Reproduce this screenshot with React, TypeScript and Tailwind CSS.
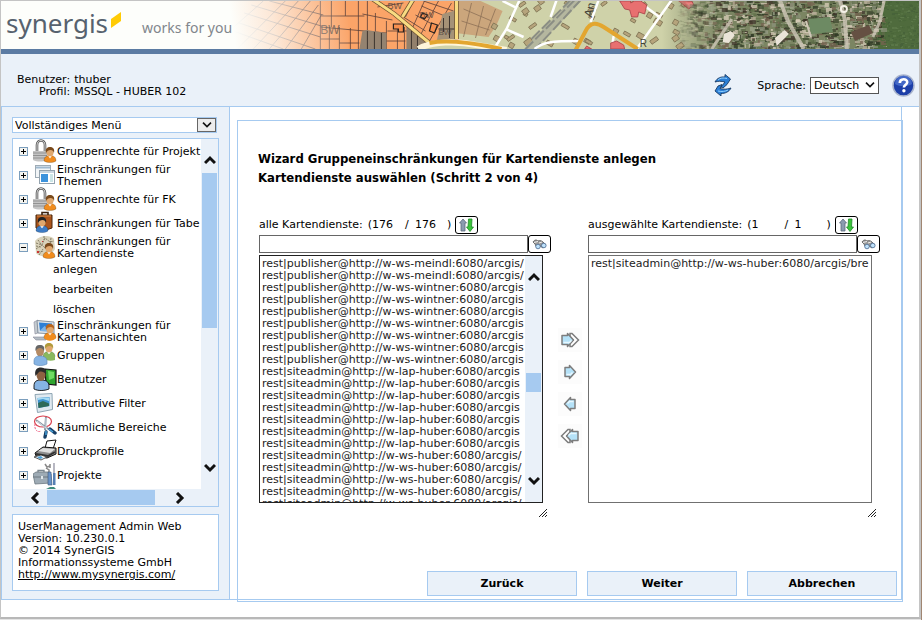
import { useState } from 'react';
import type { ReactNode } from 'react';
import clsx from 'clsx';

const LEFT_SERVICES = [
  ...Array(2).fill('rest|publisher@http://w-ws-meindl:6080/arcgis/'),
  ...Array(7).fill('rest|publisher@http://w-ws-wintner:6080/arcgis'),
  ...Array(7).fill('rest|siteadmin@http://w-lap-huber:6080/arcgis'),
  ...Array(5).fill('rest|siteadmin@http://w-ws-huber:6080/arcgis/'),
];

const RIGHT_SERVICES = ['rest|siteadmin@http://w-ws-huber:6080/arcgis/bre'];

type MenuEntry = { label: string; icon: ReactNode; children?: string[]; wrap?: boolean };

const MENU: MenuEntry[] = [
  { label: 'Gruppenrechte für Projekt', icon: <LockUserIcon /> },
  { label: 'Einschränkungen für Themen', icon: <WindowsIcon />, wrap: true },
  { label: 'Gruppenrechte für FK', icon: <LockUserIcon /> },
  { label: 'Einschränkungen für Tabe', icon: <CaseUserIcon /> },
  {
    label: 'Einschränkungen für Kartendienste',
    icon: <MapUserIcon />,
    wrap: true,
    children: ['anlegen', 'bearbeiten', 'löschen'],
  },
  { label: 'Einschränkungen für Kartenansichten', icon: <MonitorUserIcon />, wrap: true },
  { label: 'Gruppen', icon: <GroupIcon /> },
  { label: 'Benutzer', icon: <UserBookIcon /> },
  { label: 'Attributive Filter', icon: <PictureIcon /> },
  { label: 'Räumliche Bereiche', icon: <ScissorsIcon /> },
  { label: 'Druckprofile', icon: <PrinterIcon /> },
  { label: 'Projekte', icon: <ToolboxIcon /> },
];

export default function App() {
  return (
    <div className="border-r border-[#a08672] bg-white font-['DejaVu_Sans',Verdana,sans-serif] text-[11px] leading-3 text-black">
      <div className="border-t border-l border-r-2 border-b-2 border-[#c4c4c4] border-b-[#b8b8b8] pb-[17px]">
        <Banner />
        <Header />
        <div className="flex items-stretch">
          <Sidebar />
          <main className="mr-[17px] min-w-0 flex-1 border-r border-b border-[#a6caf0] pt-[13px] pl-[7px]">
            <Wizard />
          </main>
        </div>
      </div>
      <div className="h-px bg-[#e4e4e4]" />
    </div>
  );
}

function Banner() {
  return (
    <div className="relative h-[53px] overflow-hidden border-b-[5px] border-[#5b7ba3] bg-[#fdfefb]">
      <MapStrip />
      <div className="relative flex items-start font-['Noto_Sans',sans-serif]">
        <span className="pt-1 pl-[5px] text-[26px] leading-9 text-[#57626e]">synergis</span>
        <svg className="mt-[11px] ml-[2px] h-4 w-3" viewBox="0 0 12 16">
          <path d="M1 7 11 0v9L1 16z" fill="#ffcb05" />
        </svg>
        <span className="pt-[17px] pl-5 text-[14px] leading-5 text-[#81868c]">works for you</span>
      </div>
    </div>
  );
}

function Header() {
  return (
    <header className="flex h-[53px] items-center border-b border-[#a6caf0] bg-[#eaf1f9] pr-1">
      <dl className="mt-3 grid grid-cols-[auto_auto] gap-x-1 pl-4">
        <dt className="text-right">Benutzer:</dt>
        <dd>thuber</dd>
        <dt className="text-right">Profil:</dt>
        <dd>MSSQL - HUBER 102</dd>
      </dl>
      <div className="mt-[10px] ml-auto flex items-center">
        <button aria-label="Aktualisieren">
          <RefreshIcon />
        </button>
        <label htmlFor="language" className="mr-1 ml-6 pt-[2px]">
          Sprache:
        </label>
        <div className="relative">
          <select
            id="language"
            className="block h-[17px] w-[69px] appearance-none border border-[#555] bg-white pt-px pl-[3px] leading-3"
          >
            <option>Deutsch</option>
            <option>English</option>
          </select>
          <Chevron className="pointer-events-none absolute top-1 right-[3px] h-2 w-3" />
        </div>
        <button aria-label="Hilfe" className="ml-[13px]">
          <HelpIcon />
        </button>
      </div>
    </header>
  );
}

function Sidebar() {
  return (
    <aside className="w-[229px] shrink-0 border-x border-b border-[#a6caf0] bg-[#eaf1f9] px-[10px] pt-[10px] pb-2">
      <div className="relative w-[205px]">
        <select
          aria-label="Menü"
          className="block h-4 w-full appearance-none border border-[#a6caf0] bg-white pt-[2px] pl-[2px] leading-3"
        >
          <option>Vollständiges Menü</option>
        </select>
        <span className="pointer-events-none absolute top-px right-px flex h-[14px] w-[19px] items-center justify-center border border-[#666] bg-[#ececec]">
          <Chevron className="h-2 w-[10px]" />
        </span>
      </div>

      <div className="mt-[5px] w-[207px] border border-[#a6caf0]">
        <div className="flex h-[350px]">
          <Tree />
          <div className="flex w-[17px] flex-col items-center">
            <Chevron up bold className="mt-4 h-[10px] w-3" />
            <div className="mt-2 h-[155px] w-[15px] bg-[#a6caf0]" />
            <Chevron bold className="mt-auto mb-4 h-[10px] w-3" />
          </div>
        </div>
        <div className="flex h-[17px] items-center pl-4">
          <Chevron bold className="h-[10px] w-3 rotate-90" />
          <div className="ml-[6px] h-[15px] w-[108px] bg-[#a6caf0]" />
          <Chevron bold className="ml-[19px] h-[10px] w-3 -rotate-90" />
        </div>
      </div>

      <div className="mt-[7px] h-[77px] w-[207px] border border-[#a6caf0] bg-white px-[5px] pt-[6px]">
        <p>UserManagement Admin Web</p>
        <p>Version: 10.230.0.1</p>
        <p>© 2014 SynerGIS</p>
        <p>Informationssysteme GmbH</p>
        <a href="http://www.mysynergis.com/" className="underline">
          http://www.mysynergis.com/
        </a>
      </div>
    </aside>
  );
}

function Tree() {
  const [open, setOpen] = useState('Einschränkungen für Kartendienste');

  return (
    <ul className="h-full min-w-0 flex-1 overflow-hidden bg-white">
      {MENU.map((entry) => (
        <li key={entry.label}>
          <div className="flex h-6 items-center">
            <button
              aria-label={entry.label}
              onClick={() => setOpen(open === entry.label ? '' : entry.label)}
              className="mr-[5px] ml-[6px] shrink-0"
            >
              <ToggleIcon open={open === entry.label} />
            </button>
            <span className="shrink-0">{entry.icon}</span>
            <span className={clsx('pt-[2px]', entry.wrap ? 'w-[124px]' : 'whitespace-nowrap')}>{entry.label}</span>
          </div>
          {open === entry.label &&
            entry.children?.map((child) => (
              <a key={child} href="#" className="flex h-5 items-center pt-[2px] pl-10">
                {child}
              </a>
            ))}
        </li>
      ))}
      <li className="pl-8">
        <svg className="h-[2px] w-3" viewBox="0 0 12 2">
          <path d="M1 2 5 0h4l2 2z" fill="#3c8a7c" />
        </svg>
      </li>
    </ul>
  );
}

function Wizard() {
  return (
    <section className="-mr-[2px] -mb-[3px] border border-[#a6caf0] pt-7 pr-[5px] pb-[5px] pl-5">
      <h1 className="font-['DejaVu_Sans_Condensed','DejaVu_Sans',sans-serif] text-[13px] leading-[19px] font-bold">
        Wizard Gruppeneinschränkungen für Kartendienste anlegen
        <br />
        Kartendienste auswählen (Schritt 2 von 4)
      </h1>

      <div className="mt-7 flex pl-px">
        <ServiceList id="all" label="alle Kartendienste:" shown="176" total="176" items={LEFT_SERVICES} scroll />
        <div className="flex w-[37px] shrink-0 flex-col items-center gap-2 pt-[113px]">
          <button aria-label="Alle hinzufügen" className="bg-[#fcfcfc]">
            <MoveIcon double />
          </button>
          <button aria-label="Hinzufügen" className="bg-[#fcfcfc]">
            <MoveIcon />
          </button>
          <button aria-label="Entfernen" className="bg-[#fcfcfc]">
            <MoveIcon left />
          </button>
          <button aria-label="Alle entfernen" className="bg-[#fcfcfc]">
            <MoveIcon left double />
          </button>
        </div>
        <ServiceList id="selected" label="ausgewählte Kartendienste:" shown="1" total="1" items={RIGHT_SERVICES} />
      </div>

      <div className="mt-[54px] flex justify-end gap-[10px]">
        {['Zurück', 'Weiter', 'Abbrechen'].map((label) => (
          <button key={label} className="h-[25px] w-[150px] border border-[#a6caf0] bg-[#eaf1f9] pt-px font-bold">
            {label}
          </button>
        ))}
      </div>
    </section>
  );
}

type ServiceListProps = {
  id: string;
  label: string;
  shown: string;
  total: string;
  items: string[];
  scroll?: boolean;
};

function ServiceList({ id, label, shown, total, items, scroll }: ServiceListProps) {
  return (
    <div className="w-[292px] shrink-0">
      <div className="flex h-5 items-center">
        <label htmlFor={id} className="mr-[5px]">
          {label}
        </label>
        <span>(</span>
        <span className="w-[33px]">{shown}</span>
        <span className="w-[10px]">/</span>
        <span className="w-8">{total}</span>
        <span>)</span>
        <button
          aria-label="Sortieren"
          className="ml-1 flex h-[18px] w-[23px] items-center justify-center rounded-[3px] border border-black bg-white"
        >
          <SortIcon />
        </button>
      </div>
      <div className="flex">
        <input
          aria-label={`${label} Suche`}
          className="h-[18px] w-[269px] border border-[#666] bg-white px-1 outline-none"
        />
        <button
          aria-label="Suchen"
          className="flex h-[18px] w-[23px] items-center justify-center rounded-[3px] border border-black bg-white"
        >
          <BinocularsIcon />
        </button>
      </div>
      <div
        className={clsx('mt-[2px] flex h-[248px] w-[284px] border bg-white', scroll ? 'border-[#222]' : 'border-[#707070]')}
      >
        <select
          id={id}
          multiple
          className="h-full min-w-0 flex-1 appearance-none overflow-hidden bg-white pt-px pl-[2px] outline-none [scrollbar-width:none]"
        >
          {items.map((item, i) => (
            <option key={i} className="block h-3 min-h-0 overflow-hidden p-0 leading-3 text-[#222]">
              {item}
            </option>
          ))}
        </select>
        {scroll && (
          <div className="flex w-[17px] flex-col items-center bg-[#eaf1f9]">
            <Chevron up bold className="mt-4 h-[10px] w-3" />
            <div className="mt-[91px] h-[19px] w-[15px] bg-[#a6caf0]" />
            <Chevron bold className="mt-auto mb-4 h-[10px] w-3" />
          </div>
        )}
      </div>
      <svg className="mt-[6px] ml-auto mr-1 h-2 w-2" viewBox="0 0 8 8" stroke="#222" fill="none">
        <path d="M0 8 8 0M3 8l5-5M6 8l2-2" />
      </svg>
    </div>
  );
}

/* Icons */

function Chevron({ up, bold, className }: { up?: boolean; bold?: boolean; className?: string }) {
  return (
    <svg
      className={clsx(className, up && 'rotate-180')}
      viewBox="0 0 12 10"
      fill="none"
      stroke="#111"
      strokeWidth={bold ? 3 : 2}
    >
      <path d="m1 2 5 5 5-5" />
    </svg>
  );
}

function ToggleIcon({ open }: { open: boolean }) {
  return (
    <svg width="9" height="9" viewBox="0 0 9 9" shapeRendering="crispEdges">
      <rect x=".5" y=".5" width="8" height="8" fill="#f4f4f0" stroke="#7b9ebd" />
      <path d={open ? 'M2 4.5h5' : 'M2 4.5h5M4.500 2v5'} stroke="#000" />
    </svg>
  );
}

function RefreshIcon() {
  return (
    <svg width="20" height="22" viewBox="0 0 20 22">
      <path d="M2 8C4 4 8 2.500 12 3V.5L17.500 5 14 10.500 10 14l-2-1 4-5C8 7 5 7 2 8z" fill="#2b7fd6" stroke="#173a63" strokeWidth=".9" />
      <path d="M18 14c-2 4-6 5.500-10 5.500V22L2 17l3-5 4-1.500-2 4c3 1 7 1 11-.5z" fill="#2b7fd6" stroke="#173a63" strokeWidth=".9" />
      <path d="M5 6c2-2 5-2.500 9-1.500M15 16c-3 1.500-6 2-10 1" fill="none" stroke="#8fd0ff" />
    </svg>
  );
}

function HelpIcon() {
  return (
    <svg width="23" height="23" viewBox="0 0 23 23">
      <circle cx="11.500" cy="11.500" r="10.500" fill="#1d3fa8" stroke="#a9b4cc" strokeWidth="1.500" />
      <path d="M3 10a8.500 8.500 0 0 1 17 0c-5 3-12 3-17 0z" fill="#5e83dc" opacity=".6" />
      <path d="M7.800 9c0-5 7.600-4.800 7.400-.8-.1 2.500-3.200 2.600-3.300 5.300" fill="none" stroke="#fff" strokeWidth="2.600" />
      <circle cx="11.900" cy="16.800" r="1.700" fill="#fff" />
    </svg>
  );
}

function SortIcon() {
  return (
    <svg width="15" height="14" viewBox="0 0 15 14">
      <path d="M4 1 .5 5H2v8h4V5h1.500z" fill="#8a9bb0" stroke="#5a6a7c" strokeWidth=".8" />
      <path d="M11 13.500 7.500 9H9l.5-8h3.500l-.5 8H14.500z" fill="#3bc43b" stroke="#1f8a2a" strokeWidth=".8" />
    </svg>
  );
}

function BinocularsIcon() {
  return (
    <svg width="15" height="11" viewBox="0 0 15 11">
      <path d="M1 3c2-3 4-2 5-1 2-1 4 0 5 1l3 3-3 3-3-2-3 2-2-4z" fill="#9a9a9a" stroke="#555" strokeWidth=".8" />
      <path d="M2 3.500 6 2.500M7 4l3-1" stroke="#eee" />
      <circle cx="6" cy="7.500" r="2.300" fill="#bfe2fb" stroke="#4a6a90" strokeWidth=".8" />
      <circle cx="11.800" cy="6.500" r="2.300" fill="#bfe2fb" stroke="#4a6a90" strokeWidth=".8" />
    </svg>
  );
}

/* short block arrow with a wide body; the double one has a second head behind it */
function MoveIcon({ left, double }: { left?: boolean; double?: boolean }) {
  return (
    <svg width="24" height="24" viewBox="0 0 24 24" className={left ? 'rotate-180' : undefined}>
      {double && <path d="M12 5.500h2L20.500 12 14 18.500h-2v-3l3-3.500-3-3.500z" fill="#fff" stroke="#7d7d7d" strokeWidth="1.500" />}
      <path
        d={double ? 'M4 7.500h5.500v-2L15.500 12l-6 6.500v-2H4z' : 'M7 7.500h4.500v-2L17.500 12l-6 6.500v-2H7z'}
        fill="#b5e2f8"
        stroke="#7d7d7d"
        strokeWidth="1.500"
        strokeLinejoin="round"
      />
      <path d={double ? 'M5.500 14.500h6l2-2' : 'M8.500 14.500h4l2-2'} stroke="#e8f8ff" strokeWidth="1.500" fill="none" />
    </svg>
  );
}

function MenuIcon({ children }: { children: ReactNode }) {
  return (
    <svg width="24" height="24" viewBox="0 0 24 24" className="block">
      {children}
    </svg>
  );
}

type PersonProps = { x: number; y: number; body: string; hair?: string; skin?: string };

function Person({ x, y, body, hair = '#7a4a1c', skin = '#e0a86e' }: PersonProps) {
  return (
    <g transform={`translate(${x} ${y})`}>
      <path d="M0 14c0-4 2.500-5.500 6-5.500s6 1.500 6 5.500c-3 2-9 2-12 0z" fill={body} stroke="#00000055" strokeWidth=".6" />
      <path d="m4 8.500 2 3 2-3z" fill="#fff" />
      <ellipse cx="6" cy="5" rx="3.600" ry="4.400" fill={skin} />
      <path d="M2 6C1 1.500 3.500 0 6 0s5 1.500 4 6c-.5-2-1.500-3-3.500-3S3 4 2 6z" fill={hair} />
    </g>
  );
}

function LockUserIcon() {
  return (
    <MenuIcon>
      <path d="M4 13V6c0-6 8-6 8 0v7" fill="none" stroke="#555" strokeWidth="2.600" />
      <path d="M4 13V6c0-6 8-6 8 0v7" fill="none" stroke="#d8d8d8" strokeWidth="1" />
      <path d="M0 12h14v9c-4 2-10 2-14 0z" fill="#c4c4c4" />
      <path d="M0 14h14M0 16.500h14M0 19h14" stroke="#929292" />
      <Person x={11} y={8} body="#f08c1e" />
    </MenuIcon>
  );
}

function WindowsIcon() {
  return (
    <MenuIcon>
      <rect x="2.500" y="2.500" width="15" height="12" fill="#f2f5f7" stroke="#9eabb5" />
      <path d="M3 4.500h14" stroke="#9fb9cf" strokeWidth="2" />
      <rect x="6.500" y="7.500" width="15" height="13" fill="#fff" stroke="#93a2ae" />
      <path d="M7 9h14" stroke="#c9d5de" strokeWidth="2" />
      <rect x="8" y="11" width="7" height="8" fill="#3d93dc" />
      <path d="M17 12h3M17 14h3M17 16h3M17 18h3" stroke="#9cc" />
    </MenuIcon>
  );
}

function CaseUserIcon() {
  return (
    <MenuIcon>
      <path d="M9 4V1.500h6V4" fill="none" stroke="#3a220e" strokeWidth="1.600" />
      <path d="M3 4h16v13l-9 3-7-3z" fill="#a9541c" stroke="#4b260b" />
      <path d="M4 5h14" stroke="#d98a48" />
      <Person x={3} y={6} body="#3e7cc4" hair="#222" />
      <path d="M4 19c3-2 7-2 10 0-2 3-7 3-10 0z" fill="#3e7cc4" />
    </MenuIcon>
  );
}

function MapUserIcon() {
  return (
    <MenuIcon>
      <path d="M2 6c4-5 14-7 19-2l1 10c-4 8-15 9-19 4z" fill="#d9d2ba" />
      <path
        d="m3 8 6 2 3-7 5 4 4-1M3 14l6-4 4 4 2-6M6 20l4-6M5 5l3 4M11 1v4M18 3l-1 7M3 11l5 1M5 17l6-1"
        fill="none"
        stroke="#7c745c"
        strokeWidth=".9"
        strokeDasharray="2 1"
      />
      <path d="M4 16h2v2H4zM9 6h1v1H9z" fill="#c33" />
      <Person x={10} y={8} body="#f08c1e" />
    </MenuIcon>
  );
}

function MonitorUserIcon() {
  return (
    <MenuIcon>
      <path d="M1 3 5 1v13l-3 1z" fill="#c4cbd0" stroke="#889" strokeWidth=".6" />
      <path d="M4 1.500 21 3v12L5 14z" fill="#dfe5ea" stroke="#8793a0" />
      <path d="M6 3.500 19 4.500v8L7 12z" fill="#2d7fd6" />
      <path d="m6.500 12 5-5 4 3 4-3v5.500z" fill="#7db4e8" />
      <path d="M0 18h12l1 3H3z" fill="#b3bcc3" stroke="#889" strokeWidth=".6" />
      <Person x={11} y={5} body="#f08c1e" hair="#b8651d" />
      <path d="M11 18c3-1 9-1 12 0-1 5-11 5-12 0z" fill="#f08c1e" />
    </MenuIcon>
  );
}

function GroupIcon() {
  return (
    <MenuIcon>
      <Person x={10} y={0} body="#8ab85e" hair="#b29b3c" />
      <path d="M11 13c3-3 9-2 11 0v4c-3 1-8 1-11-1z" fill="#8ab85e" />
      <ellipse cx="7" cy="8" rx="4" ry="5.500" fill="#b58a63" />
      <path d="M2.500 8C2 3 4 2 7 2s5 1.500 4 6c-1-2-2-3-4-3S4 6 2.500 8z" fill="#666" />
      <path d="M1 18c0-4 3-5 6-5s7 1 7 5v3c-4 2-10 2-13 0z" fill="#86b4e4" stroke="#5d86b4" strokeWidth=".6" />
    </MenuIcon>
  );
}

function UserBookIcon() {
  return (
    <MenuIcon>
      <path d="m12 2 11 1v15l-10-1z" fill="#2fa52f" stroke="#111" strokeWidth="1.200" />
      <path d="m15 4 6 1v6l-5 2z" fill="#6fdc62" />
      <path d="M1 19c0-5 3-6 7-6s8 1 8 6v3c-5 2-11 2-15 0z" fill="#86b4e4" stroke="#111" strokeWidth=".9" />
      <ellipse cx="8" cy="8" rx="4.500" ry="6" fill="#8d6242" />
      <path d="M2.500 9C1 3 4 .5 8 .5s6 3 5 7c-2-3-5-3.500-7-2.500z" fill="#2b2b2b" />
    </MenuIcon>
  );
}

function PictureIcon() {
  return (
    <MenuIcon>
      <path d="m2 3.500 17-1 .5 16-15 3z" fill="#dfe9f0" stroke="#8fa6b4" />
      <path d="m4.500 7 12-1v9l-11 2z" fill="#3f93cf" />
      <path d="m5 12 5-2 6 2.500V15l-10.500 2z" fill="#2e6a58" />
      <path d="m5 9 5-1 6 2V6.500L4.500 7z" fill="#a5dcf5" />
    </MenuIcon>
  );
}

function ScissorsIcon() {
  return (
    <MenuIcon>
      <ellipse cx="10" cy="6.500" rx="8.500" ry="5.500" fill="none" stroke="#d9404e" strokeWidth="1.200" />
      <path d="M2 9c-1 5 2 9 6 7" fill="none" stroke="#e68" strokeDasharray="2 1" />
      <path d="m3 5 12 9M13 2l-1 13" stroke="#8b99a5" strokeWidth="2" />
      <path d="m4 6 10 8M13 3v10" stroke="#e6eef4" strokeWidth=".8" />
      <path d="m17 14 5 4M13 17l-1 5" stroke="#163f66" strokeWidth="3.400" strokeLinecap="round" />
      <path d="m16 14 4 3M13 16v4" stroke="#4aa6e0" strokeWidth="1.400" />
    </MenuIcon>
  );
}

function PrinterIcon() {
  return (
    <MenuIcon>
      <path d="m12 9 2-7 9-1-3 9z" fill="#fff" stroke="#111" />
      <path d="m2 14 8-6 13 1v6l-9 4-11-2z" fill="#8d8d8d" stroke="#111" />
      <path d="m5 12 5-3 12 1-5 4z" fill="#dedede" />
      <path d="m3 15 12 2 7-4" stroke="#333" fill="none" strokeWidth="2" />
      <path d="m1 18 7-2 6 2-6 3z" fill="#f2f6f8" stroke="#333" strokeWidth=".8" />
      <path d="m4 18 4-1 2 2-3 1z" fill="#4c9fd6" />
    </MenuIcon>
  );
}

function ToolboxIcon() {
  return (
    <MenuIcon>
      <path d="M5 10V7.500h6V10" fill="none" stroke="#7a868f" strokeWidth="1.300" />
      <path d="M0 11 3 9h13l2 2v9l-16 1z" fill="#9eabb5" stroke="#6c7881" strokeWidth=".8" />
      <path d="M0 14h18" stroke="#6c7881" />
      <path d="M8 13h2v3H8z" fill="#dfe6ea" />
      <path d="m13 5 3 2v5M12 1l2 3 3-1M17 1v4" stroke="#888" fill="none" strokeWidth="1.500" />
      <path d="M15 9h3l1 13h-4z" fill="#6a94c9" stroke="#3c5677" strokeWidth=".6" />
      <path d="M21 0v12" stroke="#889" strokeWidth="1.200" />
      <path d="M20 10h2.500v12H20z" fill="#577fb3" />
    </MenuIcon>
  );
}

/* Map strip: cadastral parcels on the left, street map in the middle, aerial photo on the right */

function makeRandom(seed: number) {
  let s = seed;
  return () => {
    s = (s * 16807) % 2147483647;
    return s / 2147483647;
  };
}

const AERIAL_COLORS = ['#2f3a26', '#3f4a30', '#5d6b48', '#8b927a', '#b8ae98', '#d8cdb9', '#756350', '#3d3328', '#9fa58c', '#66754f'];
const FOREST_COLORS = ['#46603a', '#4d6b3b', '#567243', '#4a6639', '#5f7b4c'];

function buildAerial() {
  const rnd = makeRandom(71);
  return Array.from({ length: 1700 }, () => {
    const x = 675 + Math.floor(rnd() * 242);
    const forest = x > 884 - rnd() * 10;
    const palette = forest ? FOREST_COLORS : AERIAL_COLORS;
    return {
      x,
      y: Math.floor(rnd() * 49) - 1,
      w: 2 + Math.floor(rnd() * (forest ? 2 : 5)),
      h: 1 + Math.floor(rnd() * (forest ? 2 : 4)),
      fill: palette[Math.floor(rnd() * palette.length)],
      opacity: Math.min(0.75, Math.max(0.1, (x - 672) / 60)),
    };
  });
}

function buildHouses() {
  const rnd = makeRandom(19);
  return Array.from({ length: 42 }, () => ({
    x: 492 + Math.floor(rnd() * 190),
    y: Math.floor(rnd() * 46),
    w: 4 + Math.floor(rnd() * 5),
    h: 3 + Math.floor(rnd() * 3),
    angle: rnd() > 0.5 ? -35 : 30,
  }));
}

const AERIAL = buildAerial();
const HOUSES = buildHouses();

function MapStrip() {
  return (
    <svg className="absolute inset-0 h-12 w-full" viewBox="0 0 917 48" preserveAspectRatio="xMinYMid slice">
      <defs>
        <linearGradient id="fade" x1="230" x2="345" y1="18" y2="0" gradientUnits="userSpaceOnUse">
          <stop offset="0" stopColor="#fdfefb" />
          <stop offset=".35" stopColor="#fdfefb" stopOpacity=".75" />
          <stop offset="1" stopColor="#fdfefb" stopOpacity="0" />
        </linearGradient>
        <linearGradient id="green" x1="660" x2="720" y1="0" y2="0" gradientUnits="userSpaceOnUse">
          <stop offset="0" stopColor="#cfd2a9" />
          <stop offset="1" stopColor="#7b8562" />
        </linearGradient>
      </defs>

      {/* parcels */}
      <path d="M225 0h250v48H225z" fill="#fba468" />
      <g stroke="#5b4038" strokeWidth=".8" fill="none">
        <path d="M228 30 262 0M236 48 284 0M252 48 297 0M268 48 309 0M284 48 317 4M300 48 320 14" />
        <path d="M250 4 320 25M243 12l76 24M238 22l76 26M232 30l50 18M268 0l54 14" />
        <path d="M319 0v48M330 0v26M344 0v15M357 0v48M366 0v30M374 12v20M338 26v22M349 27v21M328 26v22" />
        <path d="M319 15h44M319 26l66 6M361 13l30 6M319 38h19M338 42h20M376 6l26-4" />
        <path d="M412 0l-8 16M423 0l-12 27M437 0l-18 34M450 2l-22 38M402 16l22 14M420 5l30 13M414 14l22 12M422 0l30 10" />
        <path d="M385 20v28M396 23v25M403 26v22M380 40h24M386 30h22" />
      </g>
      <path d="m365 29 20 3v16h-27l3-18z" fill="#948370" />
      <path d="m405 24 23 19-8 5h-15z" fill="#93816c" />
      <path d="m441 13 14-4v34l-20-2z" fill="#a59277" />
      <path d="M366 30v18M373 31v17M380 32v16M410 30v18M416 33v15M442 17v14M448 15v22M437 28h16" stroke="#3d352f" />
      <path d="M392 23h10v8h-5v-3h-5zM421 12l5 2-3 4-4-2zM430 22l6 2-3 8-5-2z" fill="#f79050" stroke="#28211e" strokeWidth="1.200" />
      <g fill="#473b38" opacity=".75" fontFamily="Liberation Sans, sans-serif" fontSize="9">
        <text x="319" y="33" fontSize="12">BW</text>
        <text x="386" y="8">BW</text>
        <text x="418" y="17">BW</text>
        <text x="437" y="34" fontSize="8">BW</text>
      </g>
      <path d="M222 0h125v48H222z" fill="url(#fade)" />

      {/* street map */}
      <path d="M457 0h460v48H420c10-7 24-9 37-8z" fill="url(#green)" />
      <path d="M457 0h22l22 10-6 14-8 12-33-4z" fill="#cba67c" />
      <path d="m462 8 28 12M460 20l28 9M470 2l-8 34M482 5l-8 32M494 8l-10 26" stroke="#8d7156" strokeWidth=".8" />
      <g fill="#b6a47c" stroke="#7f7454" strokeWidth=".8">
        {HOUSES.map((h, i) => (
          <rect key={i} x={h.x} y={h.y} width={h.w} height={h.h} transform={`rotate(${h.angle} ${h.x} ${h.y})`} />
        ))}
      </g>
      <g fill="none">
        <path d="M576-2 526 50" strokeWidth="8" stroke="#b5b79f" />
        <path d="M580-2 532 50M574-2 522 50M570-2 530 38" strokeWidth="2" stroke="#8b8e84" strokeDasharray="12 3" />
      </g>
      <g fill="none" stroke="#fff" strokeWidth="2.500">
        <path d="M518-1 505 28l-12 19M501 0l14 7M504 28l18 8M555-1l-6 17M533 48c8-7 16-8 46-8" />
        <path d="m597-1-8 22M635-1l24 18M670-1 635 48M612 35l-2 13" />
      </g>
      <path d="m371-2 22 15 35 29M412-2l-11 18M455-2v40" fill="none" stroke="#6e5330" strokeWidth="4.500" />
      <path d="m371-2 22 15 35 29M412-2l-11 18M455-2v40" fill="none" stroke="#f8dc82" strokeWidth="3" />
      <path d="M417 48c12-8 40-8 58-4l30 5" fill="none" stroke="#fff6da" strokeWidth="6" />
      <path d="M428 42c20-4 45 0 72 6M574 49l10-19c5-10 12-8 18-4l34 22" fill="none" stroke="#e3a62f" strokeWidth="4" />
      <g fill="#e87070" stroke="#a63e46" strokeWidth=".8">
        <path d="m618 0 5 8 5 1 2 7h6l1-5 6 2 2-9-6-4h-6l-4 2V0z" />
        <path d="m609 42 6-2 7 4 1 4h-14zM677 0l10 8 5-4-2-4zM585 45l5 3h-7z" />
      </g>
      <g fill="#45443a" fontFamily="Liberation Sans, sans-serif" fontSize="12">
        <text transform="translate(590 17) rotate(-75)">An</text>
        <text x="638" y="46" fontSize="10">R</text>
      </g>

      {/* aerial photo */}
      <path d="M884 0h33v48h-45z" fill="#4f6b3d" />
      {AERIAL.map((p, i) => (
        <rect key={i} x={p.x} y={p.y} width={p.w} height={p.h} fill={p.fill} opacity={p.opacity} />
      ))}
      <path d="m806 18 22-2 3 15-22 2z" fill="#6d8a63" />
      <path d="m849 31 18-7 4 8-18 8z" fill="#655043" />
      <g fill="none" stroke="#cdc6b6">
        <path d="m778-1 8 21 16 28M838-1l5 20 2 30" strokeWidth="4" opacity=".8" />
        <path d="m882 0-4 20-7 16M730 18l-20 30" strokeWidth="3" opacity=".8" />
        <path d="m804 20 5 16" strokeWidth="2" />
      </g>
      <path d="m722 33 7-3 4 4-6 8-6-1zM773 37l10-8 4 4-12 12z" fill="#eae4d8" />
      <circle cx="842" cy="8" r="3" fill="none" stroke="#f4f0e6" strokeWidth="2" />
    </svg>
  );
}
